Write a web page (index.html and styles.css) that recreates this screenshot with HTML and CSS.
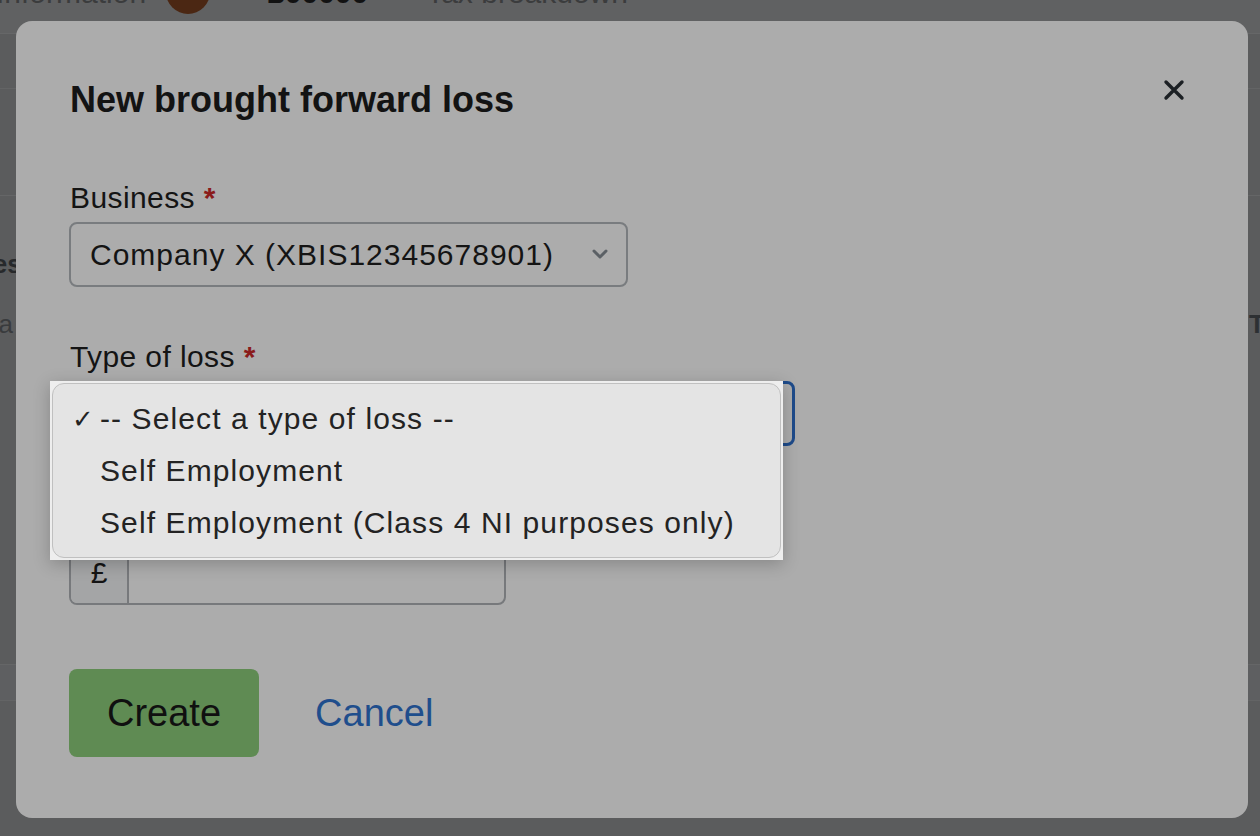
FILE: index.html
```html
<!DOCTYPE html>
<html>

<head>
    <meta charset="utf-8">
    <title>New brought forward loss</title>
    <link rel="stylesheet" href="styles.css">
</head>

<body>
    <!-- page behind the dialog -->
    <div class="page">
        <div class="tabs">
            <span class="tab">Information</span>
            <span class="tab-badge"></span>
            <span class="tab tab-strong">£00000</span>
            <span class="tab">Tax breakdown</span>
        </div>
        <div class="summary"></div>
        <div class="section-head"></div>
        <div class="section">
            <div class="section-row">
                <span class="row-title">Losses</span>
            </div>
            <div class="section-row">
                <span class="row-text">Data</span>
                <span class="row-end">Total</span>
            </div>
        </div>
        <div class="section-foot"></div>
    </div>

    <!-- dialog -->
    <div class="modal">
        <div class="modal-header">
            <h1 class="modal-title">New brought forward loss</h1>
            <button class="close-button" type="button" aria-label="Close">
                <svg width="22" height="22" viewBox="0 0 22 22">
                    <path d="M3 3 L19 19 M19 3 L3 19" stroke="#1c2024" stroke-width="3.4" stroke-linecap="round" fill="none" />
                </svg>
            </button>
        </div>

        <form id="lossForm">
            <div class="field field-first">
                <div class="label">Business <span class="req">*</span></div>
                <div class="select">
                    <span>Company X (XBIS12345678901)</span>
                    <svg class="chevron" width="16" height="11" viewBox="0 0 16 11">
                        <path d="M2 2 L8 8 L14 2" stroke="#5b6065" stroke-width="3" stroke-linecap="round" stroke-linejoin="round" fill="none" />
                    </svg>
                </div>
            </div>

            <div class="field field-type">
                <div class="label">Type of loss <span class="req">*</span></div>
                <div class="select select-focus"></div>

                <div class="dropdown">
                    <div class="menu">
                        <div class="option"><span class="tick">✓</span>-- Select a type of loss --</div>
                        <div class="option"><span class="tick"></span>Self Employment</div>
                        <div class="option"><span class="tick"></span>Self Employment (Class 4 NI purposes only)</div>
                    </div>
                </div>
            </div>

            <div class="field">
                <div class="label">Amount <span class="req">*</span></div>
                <div class="money">
                    <span class="money-prefix">£</span>
                    <span class="money-input"></span>
                </div>
            </div>

            <div class="actions">
                <button class="create-button" type="button">Create</button>
                <a class="cancel-link" href="#">Cancel</a>
            </div>
        </form>
    </div>
</body>

</html>
```

FILE: styles.css
```css
/* whole window, dimmed by the dialog backdrop */
body {
    margin: 0;
    width: 1260px;
    height: 836px;
    overflow: hidden;
    position: relative;
    background-color: #5b5c5d;
    font-family: "Liberation Sans", Arial, sans-serif;
}

/* page behind the dialog */
.tabs {
    display: flex;
    align-items: flex-start;
    height: 64px;
    margin-top: -30px;
    padding-top: 5px;
    box-sizing: border-box;
    border-bottom: 1px solid #666768;
    background-color: #606162;
    font-size: 30px;
    line-height: 36px;
    color: #3b3c3d;
}

.tab {
    white-space: nowrap;
}

.tabs .tab:first-child {
    margin-left: -4px;
}

.tab-badge {
    width: 44px;
    height: 44px;
    margin: -5px 58px 0 20px;
    border-radius: 50%;
    background-color: #4b2713;
}

.tab-strong {
    font-weight: bold;
    color: #121212;
    margin-right: 58px;
}

.summary {
    height: 54px;
    border-bottom: 1px solid #636465;
}

.section-head {
    height: 106px;
    border-bottom: 1px solid #656667;
}

.section {
    height: 469px;
    padding-top: 38px;
    box-sizing: border-box;
    border-bottom: 1px solid #656667;
}

.section-row {
    display: flex;
    height: 60px;
    align-items: center;
    font-size: 26px;
}

.row-title {
    margin-left: -68px;
    font-weight: bold;
    color: #27292b;
}

.row-text {
    margin-left: -42px;
    color: #393b3d;
}

.row-end {
    margin-left: auto;
    margin-right: -69px;
    width: 80px;
    font-weight: bold;
    color: #2d3033;
}

.section-foot {
    height: 35px;
    border-bottom: 1px solid #636465;
    background-color: #5e5f61;
}

/* dialog */
.modal {
    position: absolute;
    left: 16px;
    top: 21px;
    width: 1232px;
    height: 797px;
    box-sizing: border-box;
    padding: 57px 54px 0 53px;
    border-radius: 16px;
    background-color: #acacac;
    color: #141414;
}

.modal-header {
    display: flex;
    justify-content: space-between;
    align-items: flex-start;
}

.modal-title {
    margin: 0 0 0 1px;
    font-size: 36px;
    line-height: 44px;
    font-weight: bold;
    color: #131313;
}

.close-button {
    margin: 1px 9px 0 0;
    padding: 0;
    border: 0;
    background: none;
    width: 22px;
    height: 22px;
}

.field {
    position: relative;
    margin-top: 52px;
}

.field-first {
    margin-top: 58px;
}

.label {
    margin-left: 1px;
    font-size: 30px;
    line-height: 35px;
    letter-spacing: 0.4px;
    margin-bottom: 7px;
}

.req {
    color: #8a1b1b;
    font-weight: bold;
}

.select {
    display: flex;
    align-items: center;
    justify-content: space-between;
    width: 559px;
    height: 65px;
    box-sizing: border-box;
    padding: 0 18px 0 19px;
    border: 2px solid #797c7f;
    border-radius: 8px;
    font-size: 30px;
    letter-spacing: 1px;
}

.select-focus {
    width: 726px;
    border: 3px solid #1e4b8a;
}

/* open native list of the type select */
.dropdown {
    position: absolute;
    z-index: 5;
    left: -19px;
    top: 42px;
    width: 733px;
    height: 179px;
    box-sizing: border-box;
    padding: 2px;
    background-color: #eeeeee;
    box-shadow: 0 4px 16px rgba(0, 0, 0, 0.22);
}

.menu {
    height: 100%;
    box-sizing: border-box;
    padding: 9px 0;
    border: 1px solid #c0c0c0;
    border-radius: 12px;
    background-color: #e4e4e4;
}

.option {
    display: flex;
    align-items: center;
    height: 52px;
    font-size: 30px;
    letter-spacing: 1.1px;
    color: #232323;
    white-space: nowrap;
}

.tick {
    width: 28px;
    padding-left: 19px;
    font-size: 26px;
    letter-spacing: 0;
}

.money {
    display: flex;
    width: 437px;
    height: 65px;
    box-sizing: border-box;
    border: 2px solid #77797c;
    border-radius: 8px;
    overflow: hidden;
}

.money-prefix {
    display: flex;
    align-items: center;
    justify-content: center;
    width: 56px;
    border-right: 2px solid #77797c;
    background-color: #a4a5a6;
    font-size: 30px;
}

.money-input {
    flex: 1;
}

.actions {
    display: flex;
    align-items: center;
    gap: 56px;
    margin-top: 64px;
}

.create-button {
    height: 88px;
    padding: 0 38px;
    border: 0;
    border-radius: 8px;
    background-color: #5f8b53;
    color: #101010;
    font-family: inherit;
    font-size: 38px;
}

.cancel-link {
    color: #1f4e8c;
    font-size: 38px;
    text-decoration: none;
}
```
